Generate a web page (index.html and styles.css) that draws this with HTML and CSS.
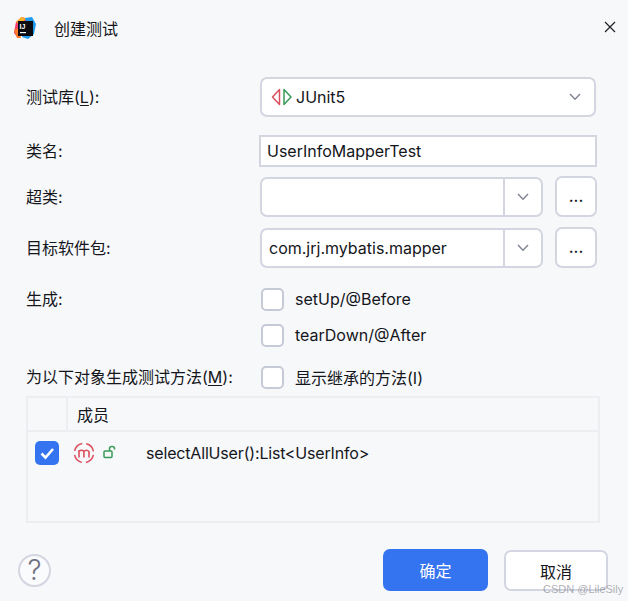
FILE: index.html
```html
<!DOCTYPE html>
<html lang="zh-CN">
<head>
<meta charset="utf-8">
<title>创建测试</title>
<link rel="stylesheet" href="styles.css">
</head>
<body>
<div class="dialog">
  <header class="titlebar">
    <svg class="logo" viewBox="0 0 24 24" width="24" height="24">
      <path d="M3 6 L9 1 L14 3 L10 12 L5 22 L1 17 L2 11Z" fill="#fb3f6c"/>
      <path d="M3 6 L8 1 L13 2 L8 9Z" fill="#fcb02b"/>
      <path d="M12 2 L19 1 L23 8 L21 18 L15 23 L9 21 L14 10Z" fill="#1f9bf0"/>
      <path d="M1 14 L5 12 L8 22 L4 22Z" fill="#f97a2a"/>
      <rect x="5" y="5" width="15" height="15" fill="#0c0b10"/>
      <text x="6.5" y="12.5" class="logo-text">IJ</text>
      <rect x="7" y="16" width="6" height="1.2" fill="#fff"/>
    </svg>
    <span class="title">创建测试</span>
    <svg class="close" viewBox="0 0 12 12" width="12" height="12"><path d="M1 1 L11 11 M11 1 L1 11" stroke="#1d1f24" stroke-width="1.2" fill="none"/></svg>
  </header>

  <main class="form">
    <div class="row row-lib">
      <label class="label">测试库(<u>L</u>):</label>
      <div class="combo combo-full">
        <span class="combo-value">
          <svg class="junit" viewBox="0 0 22 18" width="22" height="18">
            <path d="M8.5 1.5 V16.5 L1.5 9Z" fill="none" stroke="#db4f5f" stroke-width="1.5" stroke-linejoin="round"/>
            <path d="M13 1.5 V16.5 L20 9Z" fill="none" stroke="#3a9a57" stroke-width="1.5" stroke-linejoin="round"/>
          </svg>
          JUnit5
        </span>
        <svg class="chev" viewBox="0 0 12 8" width="12" height="8"><path d="M1 1 L6 6.2 L11 1" fill="none" stroke="#7f8392" stroke-width="1.4"/></svg>
      </div>
    </div>

    <div class="row row-name">
      <label class="label">类名:</label>
      <div class="textfield">UserInfoMapperTest</div>
    </div>

    <div class="row row-super">
      <label class="label">超类:</label>
      <div class="combo-group">
        <div class="combo combo-split">
          <span class="combo-value"></span>
          <span class="arrow-box"><svg class="chev" viewBox="0 0 12 8" width="12" height="8"><path d="M1 1 L6 6.2 L11 1" fill="none" stroke="#7f8392" stroke-width="1.4"/></svg></span>
        </div>
        <div class="dots">...</div>
      </div>
    </div>

    <div class="row row-pkg">
      <label class="label">目标软件包:</label>
      <div class="combo-group">
        <div class="combo combo-split">
          <span class="combo-value pkg">com.jrj.mybatis.mapper</span>
          <span class="arrow-box"><svg class="chev" viewBox="0 0 12 8" width="12" height="8"><path d="M1 1 L6 6.2 L11 1" fill="none" stroke="#7f8392" stroke-width="1.4"/></svg></span>
        </div>
        <div class="dots">...</div>
      </div>
    </div>

    <div class="row row-gen1">
      <label class="label">生成:</label>
      <div class="check"><span class="box"></span><span>setUp/@Before</span></div>
    </div>

    <div class="row row-gen2">
      <span></span>
      <div class="check"><span class="box"></span><span>tearDown/@After</span></div>
    </div>

    <div class="row row-methods">
      <label class="label">为以下对象生成测试方法(<u>M</u>):</label>
      <div class="check"><span class="box"></span><span>显示继承的方法(I)</span></div>
    </div>

    <section class="table">
      <div class="thead"><span class="th-check"></span><span class="th-member">成员</span></div>
      <div class="tr">
        <span class="box checked">
          <svg viewBox="0 0 24 24" width="24" height="24"><path d="M6.5 12.5 L10.5 16.5 L18 8" fill="none" stroke="#fff" stroke-width="2.6"/></svg>
        </span>
        <svg class="m-icon" viewBox="0 0 22 22" width="22" height="22">
          <circle cx="11" cy="11" r="9.6" fill="none" stroke="#db4f5f" stroke-width="1.5" stroke-dasharray="11 4.08" stroke-dashoffset="-2"/>
          <path d="M6 15.5 V8 M6 9.5 Q8.5 7 10.9 9.5 V15.5 M10.9 9.5 Q13.5 7 16 9.5 V15.5" fill="none" stroke="#db4f5f" stroke-width="1.6"/>
        </svg>
        <svg class="lock" viewBox="0 0 14 14" width="14" height="14">
          <rect x="1" y="6" width="8" height="6.5" rx="1" fill="none" stroke="#3a9a57" stroke-width="1.5"/>
          <path d="M6.5 6 V3.5 Q6.5 1.5 9 1.5 Q11.5 1.5 11.5 3.5 V4.5" fill="none" stroke="#3a9a57" stroke-width="1.5"/>
        </svg>
        <span class="member">selectAllUser():List&lt;UserInfo&gt;</span>
      </div>
    </section>
  </main>

  <footer class="footer">
    <div class="help">?</div>
    <div class="actions">
      <button class="btn primary">确定</button>
      <button class="btn secondary">取消</button>
    </div>
  </footer>
  <span class="watermark">CSDN @LileSily</span>
</div>
</body>
</html>
```
FILE: styles.css
```css
* { box-sizing: border-box; }
html, body { margin: 0; padding: 0; }
body {
  width: 628px;
  height: 601px;
  overflow: hidden;
  background: #f7f8fa;
  color: #14161b;
  font-family: Inter, "Noto Sans CJK SC", sans-serif;
  font-size: 16px;
}
.dialog { position: relative; width: 628px; height: 601px; }

.titlebar {
  display: flex;
  align-items: center;
  height: 56px;
  padding: 0 12px 0 13px;
}
.logo { flex: none; }
.logo-text { font: 700 7px "Liberation Sans", sans-serif; fill: #fff; }
.title { margin-left: 17px; font-size: 16px; flex: 1; }
.close { flex: none; margin-top: -3px; }

.form { padding: 21px 31px 0 26px; }
.row {
  display: grid;
  grid-template-columns: 234px 1fr;
  align-items: center;
}
.label { line-height: 20px; }
u { text-underline-offset: 2px; }

.row-lib { height: 40px; }
.row-name { height: 32px; margin-top: 18px; grid-template-columns: 233px 1fr; }
.row-super { height: 41px; margin-top: 9px; }
.row-pkg { height: 40px; margin-top: 10px; }
.row-gen1 { height: 24px; margin-top: 20px; }
.row-gen2 { height: 24px; margin-top: 12px; }
.row-methods { height: 24px; margin-top: 18px; }

.combo {
  display: flex;
  align-items: center;
  height: 40px;
  background: #fff;
  border: 2px solid #d3d5e0;
  border-radius: 7px;
}
.combo-full { justify-content: space-between; padding: 0 13px 0 9px; margin-right: 1px; }
.combo-value { display: flex; align-items: center; gap: 3px; flex: 1; }
.pkg { padding-left: 7px; }
.junit { flex: none; }
.combo-group { display: flex; gap: 12px; align-items: center; }
.combo-split { width: 283px; flex: none; }
.arrow-box {
  display: flex;
  align-items: center;
  justify-content: center;
  width: 38px;
  height: 100%;
  border-left: 2px solid #d3d5e0;
}
.dots {
  width: 42px;
  height: 41px;
  background: #fff;
  border: 2px solid #d3d5e0;
  border-radius: 7px;
  text-align: center;
  line-height: 36px;
  font-weight: 500;
}
.textfield {
  height: 32px;
  background: #fff;
  border: 2px solid #d3d5e0;
  padding-left: 6px;
  line-height: 28px;
}

.check { display: flex; align-items: center; gap: 11px; padding-left: 1px; }
.box {
  flex: none;
  display: block;
  width: 23px;
  height: 23px;
  background: #fff;
  border: 2px solid #c6c9d6;
  border-radius: 5px;
}
.box.checked { background: #3574f0; border: 0; margin-left: 7px; width: 24px; height: 24px; }
.box.checked svg { display: block; }

.table {
  margin: 7px -3px 0 0;
  height: 127px;
  border: 2px solid #eceef2;
  background: #f7f8fa;
}
.thead {
  display: flex;
  align-items: center;
  height: 34px;
  border-bottom: 2px solid #eceef2;
}
.th-check { width: 40px; height: 100%; border-right: 2px solid #eceef2; }
.th-member { margin-left: 9px; }
.tr { display: flex; align-items: center; height: 40px; margin-top: 1px; }
.m-icon { margin-left: 14px; flex: none; }
.lock { margin-left: 8px; margin-top: -2px; flex: none; }
.member { margin-left: 29px; letter-spacing: -0.17px; }

.footer {
  display: flex;
  align-items: center;
  justify-content: space-between;
  padding: 26px 20px 0 18px;
}
.help {
  width: 33px;
  height: 33px;
  border: 2px solid #d3d5e0;
  border-radius: 50%;
  background: #fafbfd;
  color: #6f7280;
  font-size: 28px;
  font-weight: 300;
  line-height: 29px;
  text-align: center;
}
.actions { display: flex; gap: 16px; align-items: flex-end; }
.btn {
  width: 105px;
  height: 42px;
  border: 2px solid #d3d5e0;
  border-radius: 7px;
  background: #fff;
  color: #14161b;
  font: 16px Inter, "Noto Sans CJK SC", sans-serif;
  padding: 0;
}
.btn.secondary { width: 104px; height: 41px; }
.btn.primary { background: #3574f0; border-color: #3574f0; color: #fff; }
.watermark {
  position: absolute;
  left: 543px;
  top: 583px;
  white-space: nowrap;
  font-family: "Liberation Sans", sans-serif;
  font-size: 11px;
  color: rgba(120, 122, 130, 0.6);
}
```
